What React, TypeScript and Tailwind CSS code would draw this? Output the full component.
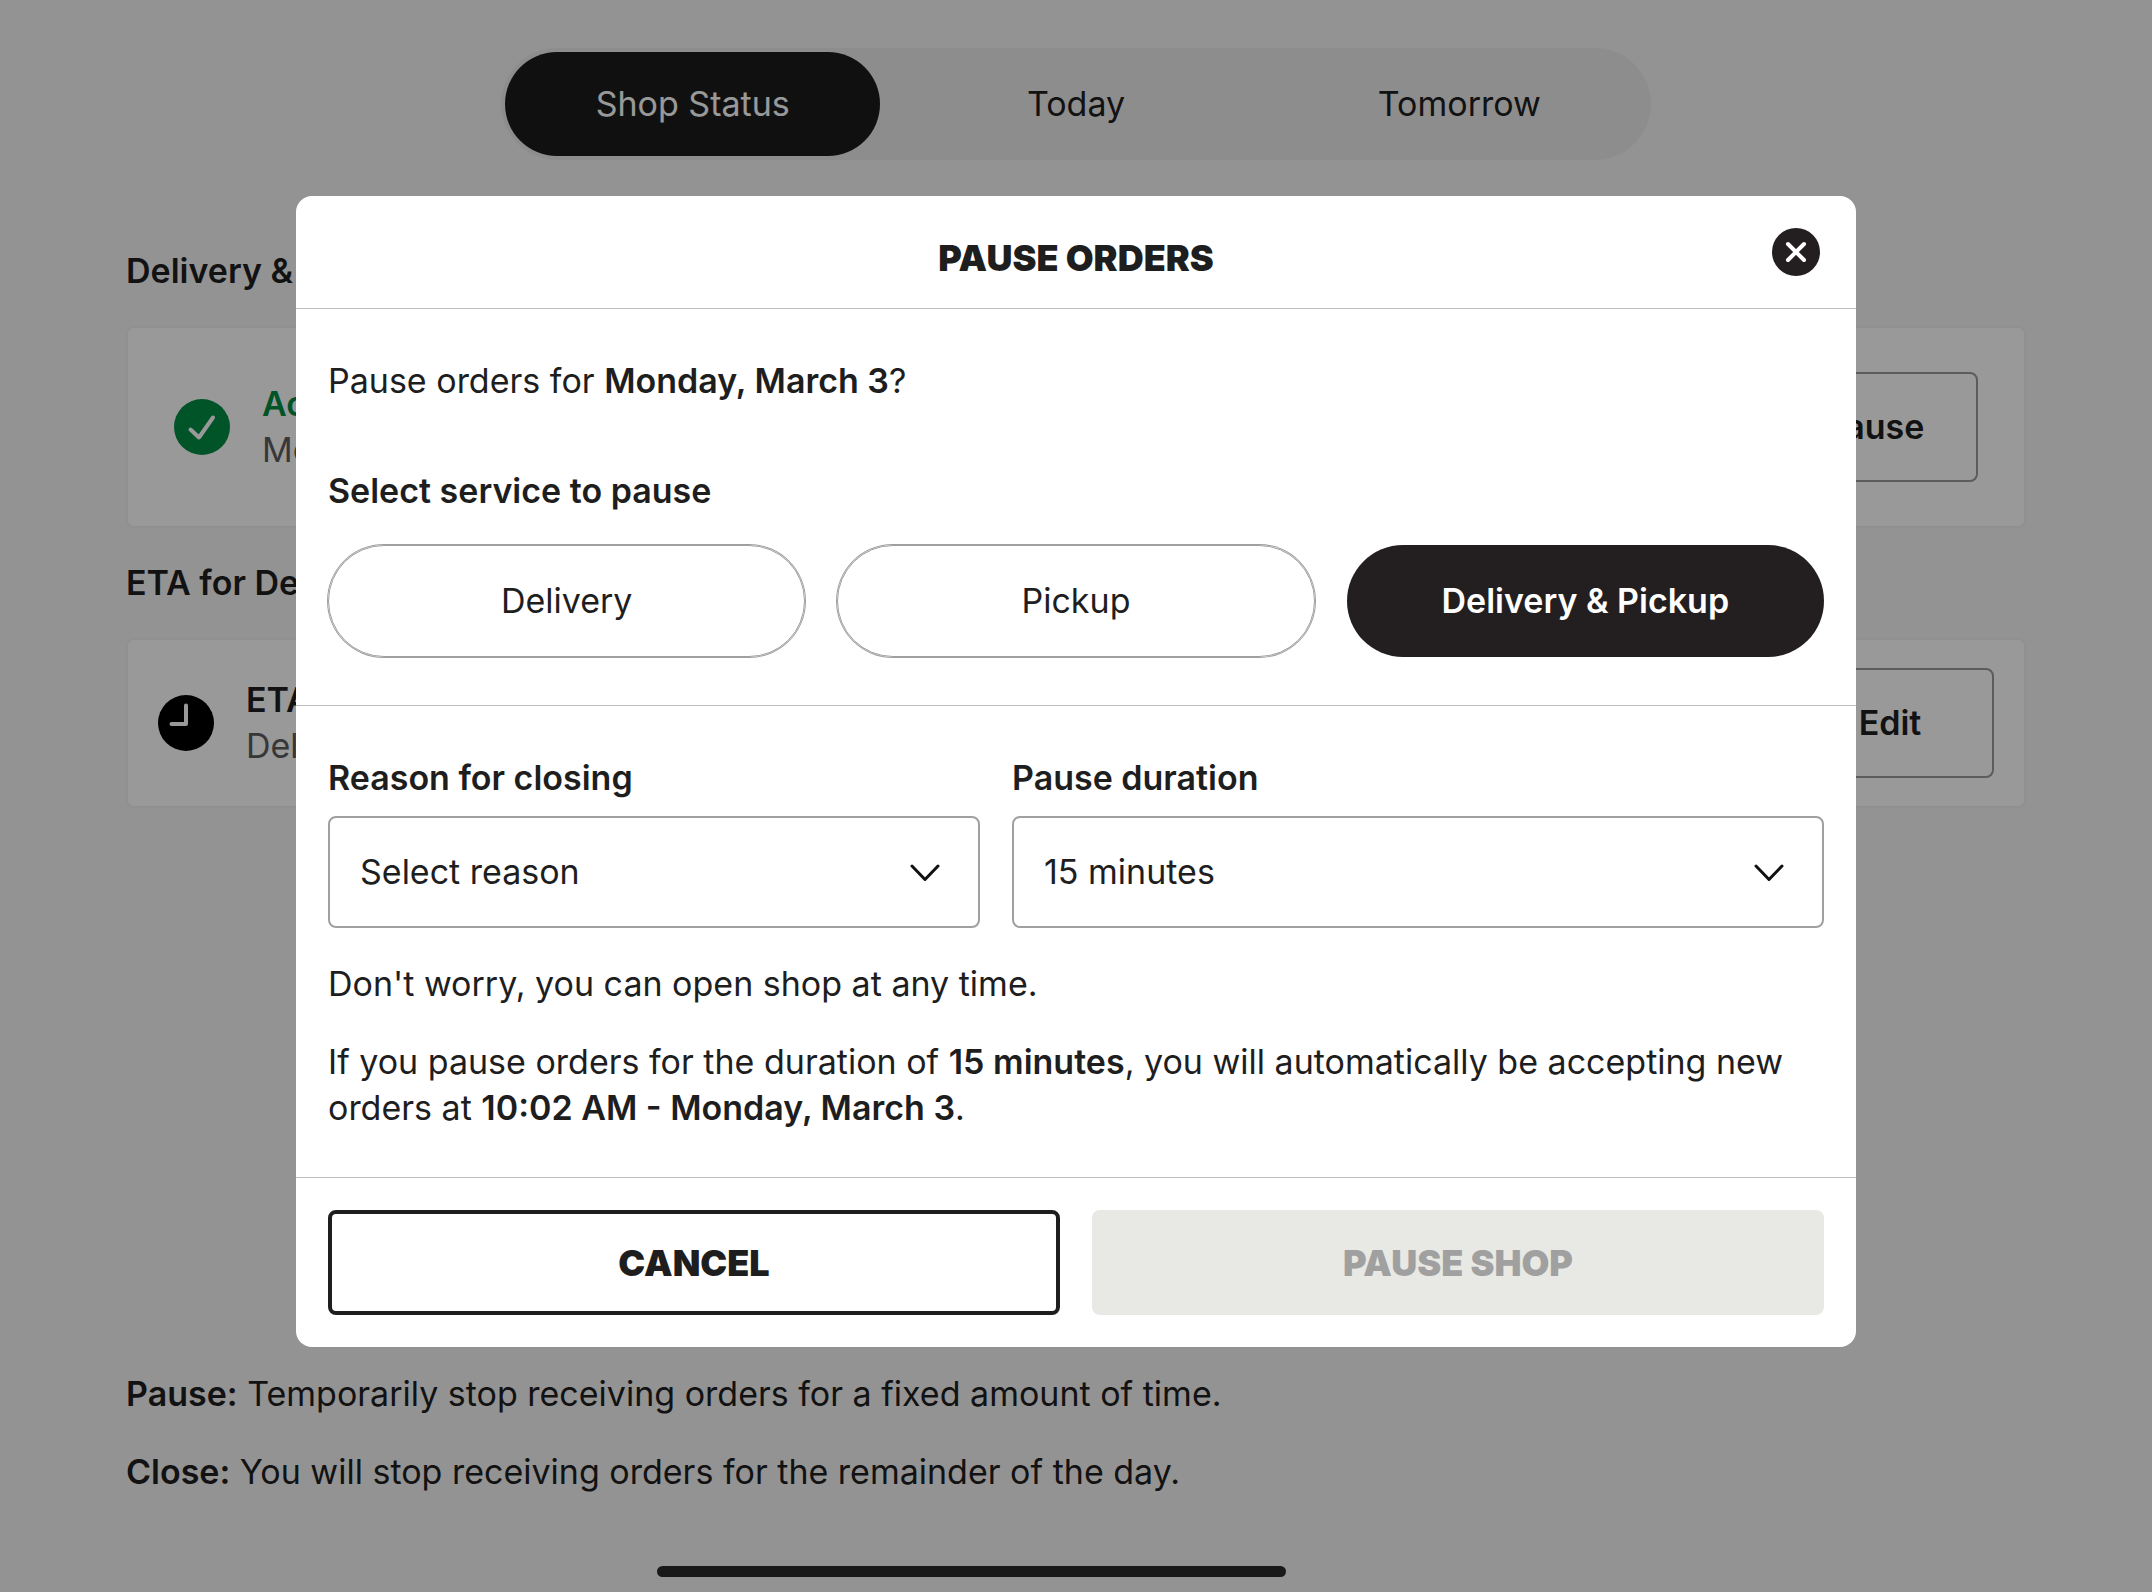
import { useState } from "react";
import type { ReactNode } from "react";

const tabs = ["Shop Status", "Today", "Tomorrow"];
const services = ["Delivery", "Pickup", "Delivery & Pickup"];

function CheckBadge() {
  return (
    <svg viewBox="0 0 56 56" className="size-14 shrink-0" fill="none" aria-hidden="true">
      <circle cx="28" cy="28" r="28" fill="#008c43" />
      <path d="M16.5 30.5 25 38.5 39 18.5" stroke="#fff" strokeWidth="4" strokeLinecap="round" strokeLinejoin="round" />
    </svg>
  );
}

function ClockBadge() {
  return (
    <svg viewBox="0 0 56 56" className="size-14 shrink-0" fill="none" aria-hidden="true">
      <circle cx="28" cy="28" r="28" fill="#000" />
      <path d="M28 10.5V29H13.5" stroke="#fff" strokeWidth="4" strokeLinecap="round" strokeLinejoin="round" />
    </svg>
  );
}

function CloseBadge() {
  return (
    <svg viewBox="0 0 48 48" className="size-12" fill="none" aria-hidden="true">
      <circle cx="24" cy="24" r="24" fill="#231f20" />
      <path d="m16 16 16 16M32 16 16 32" stroke="#fff" strokeWidth="4" strokeLinecap="round" />
    </svg>
  );
}

function Chevron() {
  return (
    <svg viewBox="0 0 30 18" className="pointer-events-none absolute top-12 right-10 h-[18px] w-[30px]" fill="none" aria-hidden="true">
      <path d="m2 2 13 13.500L28 2" stroke="#111" strokeWidth="3" strokeLinecap="round" strokeLinejoin="round" />
    </svg>
  );
}

type StatusCardProps = { className: string; icon: ReactNode; title: string; titleClass: string; detail: string; action: string };

function StatusCard({ className, icon, title, titleClass, detail, action }: StatusCardProps) {
  return (
    <div className={`mt-8 flex items-center gap-8 rounded-lg border-2 border-[#f0f0f0] bg-white ${className}`}>
      {icon}
      <div className="flex-1">
        <p className={`font-semibold ${titleClass}`}>{title}</p>
        <p className="text-[#5c5c5c]">{detail}</p>
      </div>
      <button type="button" className="h-[110px] w-52 rounded-lg border-2 border-[#999] font-semibold">
        {action}
      </button>
    </div>
  );
}

type SelectFieldProps = { id: string; label: string; options: string[] };

function SelectField({ id, label, options }: SelectFieldProps) {
  return (
    <div>
      <label htmlFor={id} className="block font-semibold">
        {label}
      </label>
      <div className="relative mt-[15px]">
        <select id={id} className="h-28 w-full appearance-none rounded-lg border-2 border-[#a0a0a0] bg-white pr-20 pl-[30px]">
          {options.map((option) => (
            <option key={option}>{option}</option>
          ))}
        </select>
        <Chevron />
      </div>
    </div>
  );
}

export default function App() {
  const [service, setService] = useState("Delivery & Pickup");

  return (
    <div className="font-['Inter',sans-serif] text-[34px] leading-[46px] text-[#1e1e1e]">
      <main className="flex min-h-screen flex-col bg-[#f6f6f6] px-[126px] pt-12 pb-[97px]">
        <nav className="grid w-full max-w-[1150px] grid-cols-3 gap-2 self-center rounded-full bg-[#ebebeb] p-1">
          {tabs.map((tab, i) => (
            <button key={tab} type="button" className={i === 0 ? "h-[104px] rounded-full bg-[#1c1c1c] text-white" : "h-[104px] rounded-full"}>
              {tab}
            </button>
          ))}
        </nav>

        <h2 className="mt-[88px] font-semibold">Delivery &amp; Pickup</h2>
        <StatusCard
          className="px-[46px] py-11"
          icon={<CheckBadge />}
          title="Accepting orders"
          titleClass="text-[#008c43]"
          detail="Monday, March 3"
          action="Pause"
        />
        <h2 className="mt-8 font-semibold">ETA for Delivery</h2>
        <StatusCard className="px-[30px] py-7" icon={<ClockBadge />} title="ETA" titleClass="" detail="Delivery" action="Edit" />

        <div className="mt-auto flex flex-col gap-8">
          <p>
            <strong className="font-semibold">Pause:</strong> Temporarily stop receiving orders for a fixed amount of time.
          </p>
          <p>
            <strong className="font-semibold">Close:</strong> You will stop receiving orders for the remainder of the day.
          </p>
        </div>
      </main>

      <div className="fixed inset-0 flex items-start bg-black/40 px-74 pt-49">
        <section role="dialog" aria-modal="true" aria-labelledby="dialog-title" className="w-full rounded-2xl bg-white">
          <header className="grid h-[113px] grid-cols-[1fr_auto_1fr] items-center border-b border-[#bdbdbd] px-9">
            <h1 id="dialog-title" className="col-start-2 pt-3 text-[36px] font-black">
              PAUSE ORDERS
            </h1>
            <button type="button" aria-label="Close" className="justify-self-end rounded-full">
              <CloseBadge />
            </button>
          </header>

          <div className="border-b border-[#bdbdbd] px-8 pt-[49px] pb-12">
            <p>
              Pause orders for <strong className="font-semibold">Monday, March 3</strong>?
            </p>
            <h2 className="mt-16 font-semibold">Select service to pause</h2>
            <div className="mt-[31px] grid grid-cols-3 gap-8">
              {services.map((name) => (
                <button
                  key={name}
                  type="button"
                  aria-pressed={service === name}
                  onClick={() => setService(name)}
                  className={
                    service === name
                      ? "h-28 rounded-full bg-[#231f20] font-semibold text-white"
                      : "h-28 rounded-full border border-[#a0a0a0] ring-1 ring-[#a0a0a0]"
                  }
                >
                  {name}
                </button>
              ))}
            </div>
          </div>

          <div className="border-b border-[#bdbdbd] px-8 pt-[49px] pb-[46px]">
            <div className="grid grid-cols-[652fr_812fr] gap-8">
              <SelectField id="reason" label="Reason for closing" options={["Select reason"]} />
              <SelectField id="duration" label="Pause duration" options={["15 minutes"]} />
            </div>
            <p className="mt-[33px]">Don't worry, you can open shop at any time.</p>
            <p className="mt-8">
              If you pause orders for the duration of <strong className="font-semibold">15 minutes</strong>, you will automatically be accepting new
              orders at <strong className="font-semibold">10:02 AM - Monday, March 3</strong>.
            </p>
          </div>

          <footer className="grid grid-cols-2 gap-8 p-8 text-[36px] font-black">
            <button type="button" className="h-[105px] rounded-lg border-4 border-[#1e1e1e]">
              CANCEL
            </button>
            <button type="button" disabled className="h-[105px] rounded-lg bg-[#e8e8e4] text-[#a0a0a0]">
              PAUSE SHOP
            </button>
          </footer>
        </section>
      </div>

      <div className="fixed bottom-[15px] left-[657px] h-[11px] w-[629px] rounded-full bg-[#191919]" />
    </div>
  );
}
